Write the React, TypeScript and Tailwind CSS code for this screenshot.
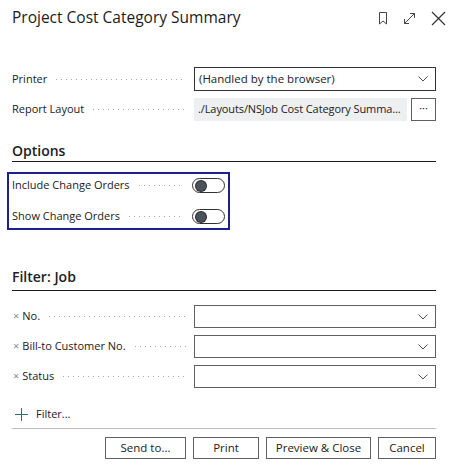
import React from "react";

const Chevron = () => (
  <svg width="10" height="6" viewBox="0 0 10 6" className="shrink-0">
    <path d="M0.5 0.5 L5 5 L9.5 0.5" fill="none" stroke="#505050" strokeWidth="1" />
  </svg>
);

const Leader = () => (
  <span className="ml-[9px] mr-[8px] h-px flex-1 self-center bg-[linear-gradient(to_right,#a6a6a6_1px,transparent_1px)] bg-[length:5px_1px] bg-repeat-x" />
);

const Toggle = () => (
  <span className="flex h-[15px] w-[33px] shrink-0 items-center rounded-full border border-[#323130] pl-[3px]">
    <span className="h-[10px] w-[10px] rounded-full bg-[#4a525c] ring-1 ring-[#2a2a2a]" />
  </span>
);

const SelectBox = ({ value, dark }: { value?: string; dark?: boolean }) => (
  <div
    className={`flex h-full flex-1 items-center justify-between border bg-white pl-[4px] pr-[7px] ${
      dark ? "border-[#323130]" : "border-[#5f5f5f]"
    }`}
  >
    <span className="text-[11.5px] text-[#212121]">{value}</span>
    <Chevron />
  </div>
);

const filters = ["No.", "Bill-to Customer No.", "Status"];
const buttons = [
  { label: "Send to...", w: "w-[81px]" },
  { label: "Print", w: "w-[66px]" },
  { label: "Preview & Close", w: "w-[105px]" },
  { label: "Cancel", w: "w-[58px]" },
];

export default function App() {
  return (
    <div className="h-[474px] w-[454px] overflow-hidden bg-white font-['Open_Sans',sans-serif] text-[#212121]">
      {/* Header */}
      <header className="flex h-9 items-center justify-between pl-3 pr-[8px]">
        <h1 className="text-[15.5px] text-[#1b1b1b]">Project Cost Category Summary</h1>
        <div className="flex items-center gap-[15px]">
          <svg width="10" height="13" viewBox="0 0 10 13">
            <path d="M1.5 0.5 H8.5 V12 L5 9 L1.5 12 Z" fill="none" stroke="#444" strokeWidth="1" />
          </svg>
          <svg width="13" height="13" viewBox="0 0 13 13">
            <path d="M1.5 11.5 L11.5 1.5 M7 1.5 H11.5 V6 M1.5 7 V11.5 H6" fill="none" stroke="#444" strokeWidth="1" />
          </svg>
          <svg width="15" height="15" viewBox="0 0 15 15">
            <path d="M1 1 L14 14 M14 1 L1 14" fill="none" stroke="#333" strokeWidth="1.2" />
          </svg>
        </div>
      </header>

      <div className="pl-3 pr-[18px] text-[11px]">
        {/* Printer */}
        <div className="mt-[31px] flex h-6">
          <div className="flex w-[182px] shrink-0 items-center">
            <span>Printer</span>
            <Leader />
          </div>
          <SelectBox value="(Handled by the browser)" dark />
        </div>

        {/* Report layout */}
        <div className="mt-[7px] flex h-[23px]">
          <div className="flex w-[182px] shrink-0 items-center">
            <span>Report Layout</span>
            <Leader />
          </div>
          <div className="flex min-w-0 flex-1 items-center overflow-hidden bg-[#eeeff1] pl-[4px]">
            <span className="whitespace-nowrap text-[11px] tracking-[-0.1px]">./Layouts/NSJob Cost Category Summa...</span>
          </div>
          <button className="ml-[4px] flex w-[25px] shrink-0 items-center justify-center border border-[#5f5f5f] bg-white pb-[4px] text-[11px] leading-none">
            ···
          </button>
        </div>

        {/* Options */}
        <h2 className="mt-[20px] h-[21px] border-b border-[#1b1b1b] text-[14px] font-semibold leading-5">
          Options
        </h2>

        <div className="-ml-[5px] mt-[10px] flex w-[223px] flex-col gap-[8px] border-2 border-[#1f1f8f] pl-[3px] pr-[3px]">
          {["Include Change Orders", "Show Change Orders"].map((label) => (
            <div key={label} className="flex h-[23px] items-center">
              <span>{label}</span>
              <Leader />
              <Toggle />
            </div>
          ))}
        </div>

        {/* Filter */}
        <h2 className="mt-[37px] border-b border-[#1b1b1b] pb-[3px] text-[14px] font-semibold leading-5">
          Filter: Job
        </h2>

        <div className="mt-[14px] flex flex-col gap-[7px]">
          {filters.map((f) => (
            <div key={f} className="flex h-[23px]">
              <div className="flex w-[182px] shrink-0 items-center">
                <span className="ml-[1px] mr-[3px] text-[11px] text-[#8a8a8a]">×</span>
                <span>{f}</span>
                <Leader />
              </div>
              <SelectBox />
            </div>
          ))}
        </div>

        <div className="mt-[16px] flex h-5 items-center gap-[8px] pl-[3px]">
          <svg width="13" height="13" viewBox="0 0 13 13">
            <path d="M6.5 0 V13 M0 6.5 H13" fill="none" stroke="#2f6f6b" strokeWidth="1" />
          </svg>
          <span className="text-[11px]">Filter...</span>
        </div>

        <div className="mt-[4px] h-px bg-[#bdbdbd]" />

        <div className="mt-[8px] flex justify-end gap-[7px]">
          {buttons.map((b) => (
            <button
              key={b.label}
              className={`${b.w} flex h-[22px] items-center justify-center border border-[#5f5f5f] bg-white text-[11.5px]`}
            >
              {b.label}
            </button>
          ))}
        </div>
      </div>
    </div>
  );
}
